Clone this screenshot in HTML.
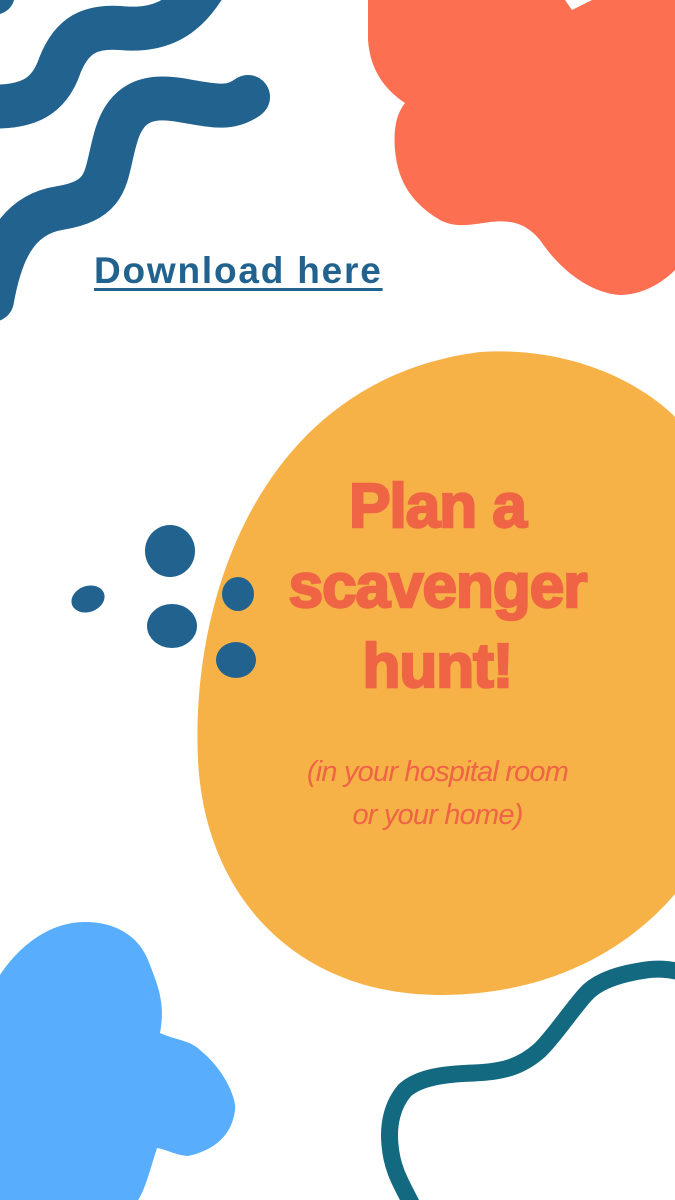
<!DOCTYPE html>
<html><head><meta charset="utf-8"><style>
html,body{margin:0;padding:0;background:#fff;}
body{width:675px;height:1200px;position:relative;overflow:hidden;font-family:"Liberation Sans",sans-serif;}
svg{position:absolute;left:0;top:0;}
.t{position:absolute;left:200px;width:475px;text-align:center;color:#EE6445;}
.h{font-weight:bold;font-size:62px;letter-spacing:-1px;line-height:80px;top:467px;-webkit-text-stroke:2.5px #EE6445;}
.s{font-style:italic;font-size:29px;line-height:43px;top:751px;letter-spacing:-0.8px;}
.d{position:absolute;left:94px;top:250px;font-weight:bold;font-size:37px;color:#21628E;text-decoration:underline;text-decoration-thickness:3px;text-underline-offset:5px;letter-spacing:1.8px;}
</style></head><body>
<svg width="675" height="1200" viewBox="0 0 675 1200">
<path d="M480,352 C590,345 675,400 700,450 L700,860 C650,940 560,995 440,995 C300,995 205,900 198,760 C190,600 260,380 480,352 Z" fill="#F7B247"/>
<path d="M368,0 L565,0 L572,10 L592,0 L675,0 L675,270 C660,285 640,295 620,295 C590,293 560,270 540,240 C525,222 510,220 490,222 C470,225 455,228 440,220 C415,205 398,185 395,150 C393,125 398,112 405,103 C385,90 370,70 368,40 Z" fill="#FD6F51"/>
<g fill="none" stroke="#21628E" stroke-width="44" stroke-linecap="round">
<path d="M-20,106 C30,110 50,95 60,65 C72,35 90,26 120,28 C160,32 185,18 205,-15"/>
<path d="M-8,300 C0,255 15,215 60,208 C110,200 105,175 115,140 C125,100 150,95 180,100 C215,106 230,110 248,97"/>
</g>
<path d="M0,0 L14,0 C12,8 6,12 0,14 Z" fill="#21628E"/>
<g fill="#21628E">
<ellipse cx="88" cy="599" rx="17" ry="13" transform="rotate(-20 88 599)"/>
<ellipse cx="170" cy="551" rx="25" ry="26"/>
<ellipse cx="172" cy="626" rx="25" ry="22"/>
<ellipse cx="238" cy="594" rx="16" ry="17"/>
<ellipse cx="236" cy="660" rx="20" ry="18"/>
</g>
<path d="M0,975 C20,945 50,922 85,922 C120,922 140,940 148,960 C160,990 165,1005 160,1033 C175,1040 190,1040 200,1050 C225,1070 237,1100 235,1110 C232,1135 215,1150 188,1156 C175,1155 168,1150 157,1148 C150,1170 145,1190 138,1200 L0,1200 Z" fill="#58AEFD"/>
<path d="M690,975 C670,968 655,968 640,971 C615,975 595,983 585,995 C570,1012 555,1035 540,1050 C520,1068 500,1072 474,1073 C445,1074 420,1077 405,1090 C392,1105 388,1125 390,1145 C392,1170 402,1185 412,1205" fill="none" stroke="#126980" stroke-width="17"/>
</svg>
<div class="d">Download here</div>
<div class="t h">Plan a<br>scavenger<br>hunt!</div>
<div class="t s">(in your hospital room<br>or your home)</div>
</body></html>
